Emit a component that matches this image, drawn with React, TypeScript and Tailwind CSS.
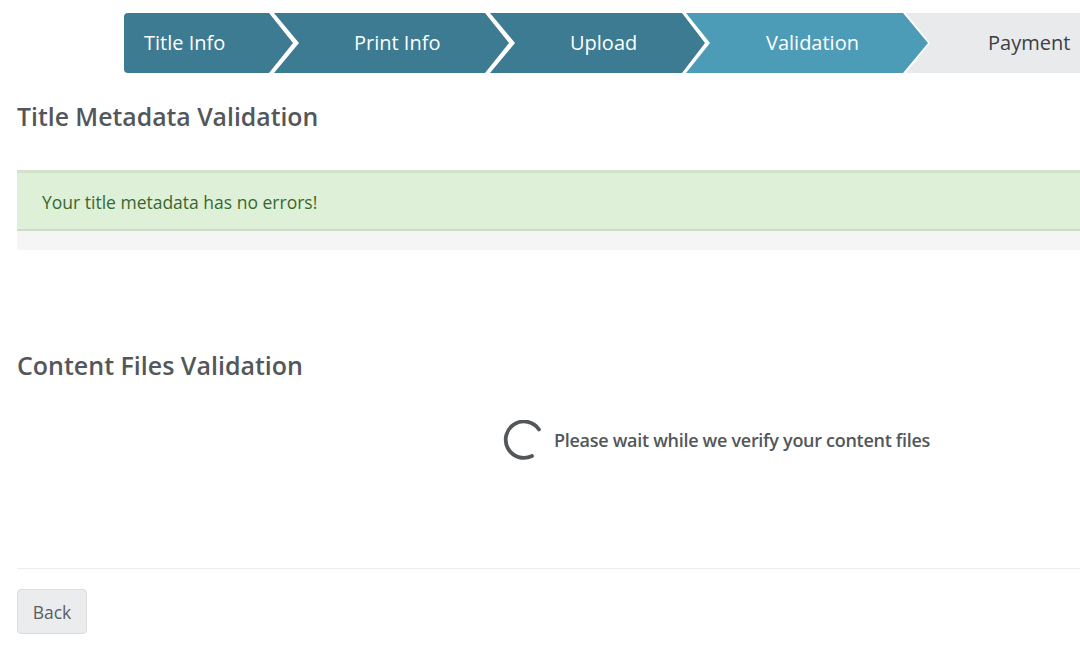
export default function App() {
  const font = { fontFamily: '"Open Sans", sans-serif' };
  return (
    <div style={font} className="w-[1080px] h-[650px] overflow-hidden bg-white text-[#53575a]">
      <div className="flex h-[60px] mt-[13px] ml-[124px] w-[1000px] text-[20px] leading-[60px]">
        <div className="w-[169px] shrink-0 pl-5 rounded-l bg-[#3c7b92] text-white [clip-path:polygon(0_0,145px_0,100%_50%,145px_100%,0_100%)]">Title Info</div>
        <div className="w-[235px] shrink-0 -ml-[19px] pl-[80px] bg-[#3c7b92] text-white [clip-path:polygon(0_0,211px_0,100%_50%,211px_100%,0_100%,25px_50%)]">Print Info</div>
        <div className="w-[215px] shrink-0 -ml-[19px] pl-[80px] bg-[#3c7b92] text-white [clip-path:polygon(0_0,192px_0,100%_50%,192px_100%,0_100%,25px_50%)]">Upload</div>
        <div className="w-[242px] shrink-0 -ml-[19px] pl-[80px] bg-[#4d9cb7] text-white [clip-path:polygon(0_0,217px_0,100%_50%,217px_100%,0_100%,24px_50%)]">Validation</div>
        <div className="w-[200px] shrink-0 -ml-[22px] pl-[82px] bg-[#e9eaec] text-[#3c4043] [clip-path:polygon(0_0,100%_0,100%_100%,0_100%,24px_50%)]">Payment</div>
      </div>

      <div className="ml-[17px]">
        <h2 className="mt-[26px] text-[24.8px] leading-[34px] font-semibold">Title Metadata Validation</h2>

        <div className="mt-[37px]">
          <div className="h-[61px] bg-[#dff0d8] border-t-[3px] border-b-2 border-t-[#d3e3cb] border-b-[#d0dacb] pl-[25px] text-[#38682f] text-[17.5px] leading-[58px]">Your title metadata has no errors!</div>
          <div className="h-[19px] bg-[#f5f5f5]"></div>
        </div>

        <h2 className="mt-[98px] text-[25px] leading-[34px] font-semibold">Content Files Validation</h2>

        <div className="mt-[38px] h-[40px] flex items-center">
          <svg className="ml-[486px] shrink-0" width="40" height="40" viewBox="0 0 40 40" fill="none">
            <path d="M36 9.5 A18.2 18.2 0 1 0 29 36" stroke="#53575a" strokeWidth="3.8" strokeLinecap="round" />
          </svg>
          <span className="ml-[11px] text-[18px] font-semibold tracking-[-0.29px] whitespace-nowrap">Please wait while we verify your content files</span>
        </div>

        <div className="mt-[108px] border-t border-[#ebebeb]"></div>

        <button className="mt-5 block w-[70px] h-[45px] pt-px rounded border border-[#dcdcdc] bg-[#ebecee] text-[17.5px] text-[#5a5e61]">Back</button>
      </div>
    </div>
  );
}
